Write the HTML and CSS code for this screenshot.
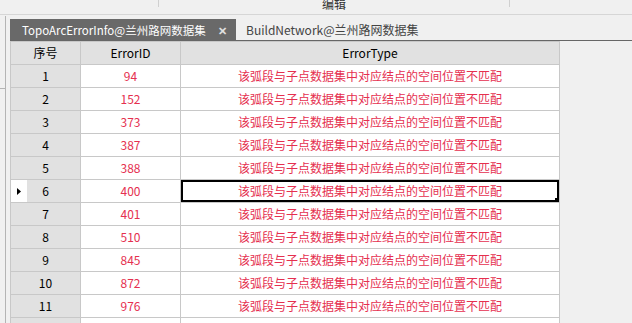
FILE: index.html
```html
<!DOCTYPE html>
<html lang="zh-CN">
<head>
  <meta charset="UTF-8">
  <title>TopoArcErrorInfo</title>
  <link rel="stylesheet" href="styles.css">
</head>
<body>
  <div class="ribbon">
    <div class="group first"></div>
    <div class="group middle"><span class="group-label">编辑</span></div>
    <div class="group"></div>
  </div>

  <div class="workspace">
    <div class="side-stub"></div>
    <div class="doc">
      <div class="tabs">
        <div class="tab active">
          <span>TopoArcErrorInfo@兰州路网数据集</span>
          <span class="close">&#x2715;</span>
        </div>
        <div class="tab">BuildNetwork@兰州路网数据集</div>
      </div>

      <table class="grid">
        <thead>
          <tr>
            <th class="col-no">序号</th>
            <th class="col-id">ErrorID</th>
            <th class="col-type">ErrorType</th>
          </tr>
        </thead>
        <tbody>
          <tr><td class="rowhead"><div class="rh"><span class="mark"></span><span>1</span></div></td><td class="id">94</td><td class="type">该弧段与子点数据集中对应结点的空间位置不匹配</td></tr>
          <tr><td class="rowhead"><div class="rh"><span class="mark"></span><span>2</span></div></td><td class="id">152</td><td class="type">该弧段与子点数据集中对应结点的空间位置不匹配</td></tr>
          <tr><td class="rowhead"><div class="rh"><span class="mark"></span><span>3</span></div></td><td class="id">373</td><td class="type">该弧段与子点数据集中对应结点的空间位置不匹配</td></tr>
          <tr><td class="rowhead"><div class="rh"><span class="mark"></span><span>4</span></div></td><td class="id">387</td><td class="type">该弧段与子点数据集中对应结点的空间位置不匹配</td></tr>
          <tr><td class="rowhead"><div class="rh"><span class="mark"></span><span>5</span></div></td><td class="id">388</td><td class="type">该弧段与子点数据集中对应结点的空间位置不匹配</td></tr>
          <tr class="current"><td class="rowhead"><div class="rh"><span class="mark"><svg width="4" height="7" viewBox="0 0 4 7"><path d="M0 0 L4 3.5 L0 7 Z" fill="#000"/></svg></span><span>6</span></div></td><td class="id">400</td><td class="type selected">该弧段与子点数据集中对应结点的空间位置不匹配</td></tr>
          <tr><td class="rowhead"><div class="rh"><span class="mark"></span><span>7</span></div></td><td class="id">401</td><td class="type">该弧段与子点数据集中对应结点的空间位置不匹配</td></tr>
          <tr><td class="rowhead"><div class="rh"><span class="mark"></span><span>8</span></div></td><td class="id">510</td><td class="type">该弧段与子点数据集中对应结点的空间位置不匹配</td></tr>
          <tr><td class="rowhead"><div class="rh"><span class="mark"></span><span>9</span></div></td><td class="id">845</td><td class="type">该弧段与子点数据集中对应结点的空间位置不匹配</td></tr>
          <tr><td class="rowhead"><div class="rh"><span class="mark"></span><span>10</span></div></td><td class="id">872</td><td class="type">该弧段与子点数据集中对应结点的空间位置不匹配</td></tr>
          <tr><td class="rowhead"><div class="rh"><span class="mark"></span><span>11</span></div></td><td class="id">976</td><td class="type">该弧段与子点数据集中对应结点的空间位置不匹配</td></tr>
          <tr class="tail"><td class="rowhead"></td><td class="id"></td><td class="type"></td></tr>
        </tbody>
      </table>
    </div>
  </div>
</body>
</html>
```

FILE: styles.css
```css
body {
  margin: 0;
  background: #f0f0f0;
  font-family: "Noto Sans CJK SC", "Noto Sans", sans-serif;
  font-size: 12px;
  color: #000;
  overflow: hidden;
}
.ribbon {
  display: flex;
  height: 14px;
  border-bottom: 1px solid #d6d6d6;
}
.group {
  height: 7px;
  flex: 1;
}
.group.first {
  flex: 0 0 158px;
  border-right: 1px solid #d0d0d0;
}
.group.middle {
  flex: 0 0 350px;
  border-right: 1px solid #d0d0d0;
  display: flex;
  justify-content: center;
  align-items: flex-start;
}
.group-label {
  margin-top: -2px;
  line-height: 12px;
  color: #333;
}
.workspace {
  display: flex;
  padding-top: 1px;
}
.side-stub {
  width: 5px;
  flex: 0 0 5px;
  margin-top: 72px;
  height: 1px;
  background: #b4b4b4;
}
.doc {
  flex: 1;
  border-left: 1px solid #b4b4b4;
  padding: 3px 0 0 4px;
}
.tabs {
  display: flex;
  height: 21px;
  border-bottom: 1px solid #666;
}
.tab {
  flex: none;
  display: flex;
  align-items: center;
  padding-left: 10px;
  color: #444;
  white-space: nowrap;
}
.tab.active {
  box-sizing: border-box;
  width: 226px;
  padding-left: 12px;
  background: #696969;
  color: #fff;
  font-size: 11.5px;
  justify-content: space-between;
}
.tab .close {
  width: 18px;
  color: #e0e0e0;
  font-size: 11px;
  font-weight: bold;
}
.grid {
  border-collapse: collapse;
  table-layout: fixed;
  width: 550px;
}
.grid th, .grid td {
  height: 22px;
  line-height: 20px;
  padding: 0;
  border: 1px solid #c8c8c8;
  text-align: center;
  white-space: nowrap;
  overflow: hidden;
}
.grid th {
  background: #e1e1e1;
  font-weight: normal;
}
.col-no {
  width: 69px;
}
.col-id {
  width: 99px;
}
.grid td {
  background: #fff;
}
.grid td.rowhead {
  background: #e1e1e1;
}
.rh {
  display: grid;
  grid-template-columns: 16px 1fr 16px;
  height: 22px;
  align-items: stretch;
}
.rh span {
  display: flex;
  align-items: center;
  justify-content: center;
}
.current .rh .mark {
  background: #fff;
}
.id, .type {
  color: #e5304f;
}
.type.selected {
  position: relative;
  box-shadow: inset 0 0 0 2px #000;
}
.type.selected::after {
  content: "";
  position: absolute;
  right: 1px;
  bottom: 1px;
  width: 3px;
  height: 3px;
  background: #000;
}
```
